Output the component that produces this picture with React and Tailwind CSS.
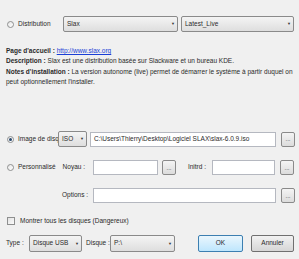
function Radio({ checked }) {
  return (
    <div className="w-[7px] h-[7px] rounded-full border border-[#8e8f8f] bg-gradient-to-br from-[#e6e6e6] to-[#ffffff] flex items-center justify-center shrink-0">
      {checked && <div className="w-[3px] h-[3px] rounded-full bg-[#2b4a6e]" />}
    </div>
  );
}

function Select({ value, className }) {
  return (
    <div className={`h-[16px] border border-[#8a8a8a] rounded-[2px] bg-gradient-to-b from-[#f4f4f4] to-[#dedede] flex items-center justify-between pl-[3px] pr-[2px] shrink-0 ${className}`}>
      <span>{value}</span>
      <span className="text-[4px] text-[#333]">▼</span>
    </div>
  );
}

function Input({ value, className }) {
  return (
    <div className={`h-[15px] border border-[#b5b8c0] bg-white flex items-center pl-[3px] shrink-0 ${className}`}>
      {value}
    </div>
  );
}

function Browse() {
  return (
    <div className="w-[14px] h-[15px] border border-[#8a8a8a] rounded-[2px] bg-gradient-to-b from-[#f4f4f4] to-[#dcdcdc] flex items-center justify-center text-[6px] leading-none shrink-0">
      ...
    </div>
  );
}

export default function App() {
  return (
    <div className="w-[299px] h-[259px] bg-[#f0f0f0] text-[#2a2a2a] text-[6.5px] leading-none overflow-hidden" style={{ fontFamily: '"Liberation Sans", Arial, sans-serif' }}>
      {/* Distribution */}
      <div className="flex items-center pt-[16px] pl-[7px]">
        <Radio />
        <span className="ml-[4px] w-[45px]">Distribution</span>
        <Select value="Slax" className="w-[115px]" />
        <Select value="Latest_Live" className="w-[113px] ml-[3px]" />
      </div>

      {/* Infos */}
      <div className="pl-[6px] pr-[4px] mt-[14px] leading-[10.3px] whitespace-nowrap">
        <div>
          <b>Page d'accueil :</b> <span className="text-[#1a3fd6] underline">http://www.slax.org</span>
        </div>
        <div>
          <b>Description :</b> Slax est une distribution basée sur Slackware et un bureau KDE.
        </div>
        <div>
          <b>Notes d'installation :</b> La version autonome (live) permet de démarrer le système à partir duquel on
        </div>
        <div>peut optionnellement l'installer.</div>
      </div>

      {/* Image de disque */}
      <div className="flex items-center pl-[7px] mt-[44px]">
        <Radio checked />
        <span className="ml-[4px] w-[40px] whitespace-nowrap">Image de disq</span>
        <Select value="ISO" className="w-[29px]" />
        <Input value="C:\Users\Thierry\Desktop\Logiciel SLAX\slax-6.0.9.iso" className="w-[186px] ml-[3px]" />
        <div className="ml-[5px]"><Browse /></div>
      </div>

      {/* Personnalisé */}
      <div className="flex items-center pl-[7px] mt-[13px]">
        <Radio />
        <span className="ml-[4px] w-[40px]">Personnalisé</span>
        <span className="w-[31px] text-right pr-[4px]">Noyau :</span>
        <Input className="w-[65px] ml-[4px]" />
        <div className="ml-[4px]"><Browse /></div>
        <span className="w-[36px] text-right pr-[6px]">Initrd :</span>
        <Input className="w-[63px]" />
        <div className="ml-[5px]"><Browse /></div>
      </div>

      {/* Options */}
      <div className="flex items-center mt-[13px]">
        <span className="w-[88px] text-right">Options :</span>
        <Input className="w-[183px] ml-[5px]" />
        <div className="ml-[5px]"><Browse /></div>
      </div>

      {/* Checkbox */}
      <div className="flex items-center pl-[7px] mt-[14px]">
        <div className="w-[8px] h-[8px] border border-[#8e8f8f] bg-gradient-to-br from-[#e2e2e2] to-[#fbfbfb]" />
        <span className="ml-[5px]">Montrer tous les disques (Dangereux)</span>
      </div>

      {/* Bottom */}
      <div className="flex items-center pl-[6px] mt-[10px]">
        <span className="w-[23px]">Type :</span>
        <Select value="Disque USB" className="w-[53px] h-[17px]" />
        <span className="ml-[4px] w-[24px]">Disque :</span>
        <Select value="P:\" className="w-[65px] h-[17px]" />
        <div className="ml-[23px] w-[45px] h-[17px] border border-[#3c7fb1] rounded-[2px] bg-gradient-to-b from-[#eaf6fd] to-[#bee6fd] flex items-center justify-center">OK</div>
        <div className="ml-[8px] w-[43px] h-[17px] border border-[#707070] rounded-[2px] bg-gradient-to-b from-[#f2f2f2] to-[#d6d6d6] flex items-center justify-center">Annuler</div>
      </div>
    </div>
  );
}
